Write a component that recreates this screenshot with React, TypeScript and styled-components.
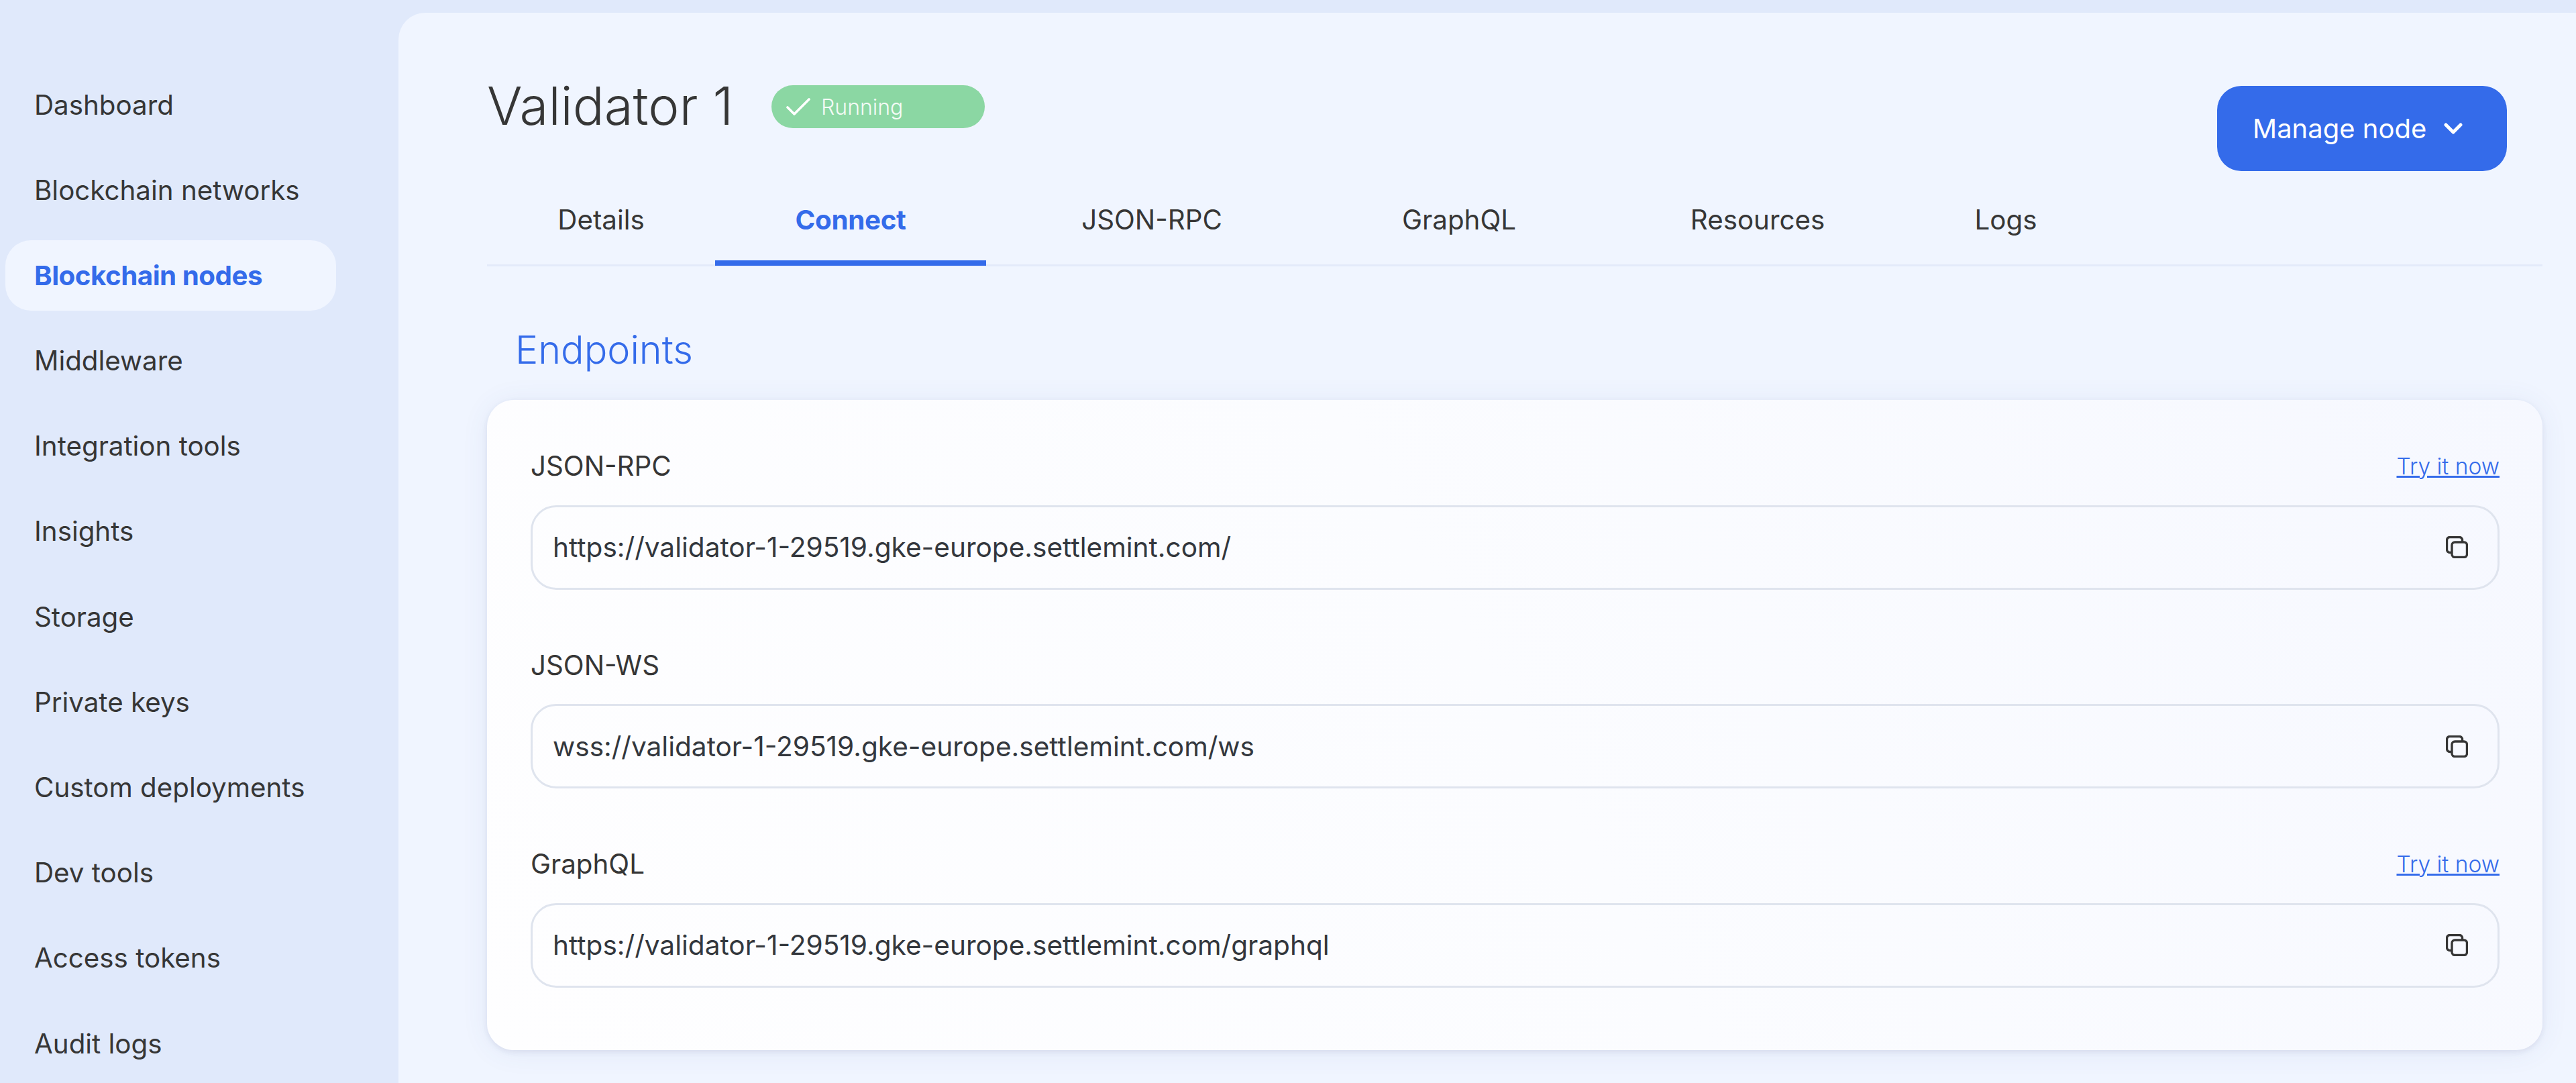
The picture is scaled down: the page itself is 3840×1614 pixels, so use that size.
import React from "react";
import styled, { createGlobalStyle } from "styled-components";

const ink = "#363636";
const blue = "#346bea";

const Global = createGlobalStyle`
  html, body { margin: 0; padding: 0; height: 100%; overflow: hidden; }
  body { background: #e0e9fb; font-family: "Inter", "Noto Sans", sans-serif; color: ${ink}; }
  * { box-sizing: border-box; }
`;

const Page = styled.div`
  display: flex;
  width: 3840px;
  height: 1614px;
  overflow: hidden;
  background: #e0e9fb;
`;

const Sidebar = styled.nav`
  flex: 0 0 594px;
  padding: 104px 93px 0 8px;
  display: flex;
  flex-direction: column;
  gap: 22.2px;
`;

const NavItem = styled.div<{ $active?: boolean }>`
  height: 105px;
  flex: 0 0 105px;
  display: flex;
  align-items: center;
  padding: 0 0 1px 43px;
  border-radius: 38px;
  font-size: 40.3px;
  letter-spacing: ${(p) => (p.$active ? "-0.5px" : "0")};
  white-space: nowrap;
  font-weight: ${(p) => (p.$active ? 700 : 375)};
  color: ${(p) => (p.$active ? blue : ink)};
  background: ${(p) => (p.$active ? "#f0f5ff" : "transparent")};
`;

const Main = styled.main`
  flex: 1;
  margin-top: 19px;
  background: #f0f5ff;
  border-top-left-radius: 40px;
  padding: 89px 50px 0 132px;
`;

const Header = styled.header`
  display: flex;
  justify-content: space-between;
  align-items: flex-start;
  height: 169px;
  padding-right: 53px;
`;

const TitleGroup = styled.div`
  display: flex;
  align-items: center;
  justify-content: flex-start;
`;

const Title = styled.h1`
  margin: 0 0 2px;
  width: 424px;
  font-size: 78px;
  line-height: 100px;
  font-weight: 300;
  color: ${ink};
`;

const Badge = styled.span`
  display: flex;
  align-items: center;
  gap: 16px;
  width: 318px;
  height: 64px;
  padding-left: 22px;
  border-radius: 32px;
  background: #8bd7a3;
  color: #f4fbf6;
  font-size: 32px;
  font-weight: 300;
`;

const ManageButton = styled.button`
  display: flex;
  align-items: center;
  gap: 26px;
  width: 432px;
  height: 127px;
  margin-top: 20px;
  padding: 0 0 0 53px;
  border: none;
  border-radius: 36px;
  background: ${blue};
  color: #fff;
  font-family: inherit;
  font-size: 40px;
  font-weight: 375;
`;

const Tabs = styled.div`
  display: flex;
  height: 119.5px;
  border-bottom: 3px solid #e3eafa;
`;

const Tab = styled.div<{ $active?: boolean; $width: number }>`
  flex: 0 0 ${(p) => p.$width}px;
  display: flex;
  align-items: center;
  justify-content: center;
  height: 118.5px;
  padding-bottom: 10px;
  font-size: 40.3px;
  letter-spacing: ${(p) => (p.$active ? "-0.3px" : "0")};
  font-weight: ${(p) => (p.$active ? 700 : 375)};
  color: ${(p) => (p.$active ? blue : ink)};
  border-bottom: 8px solid ${(p) => (p.$active ? blue : "transparent")};
`;

const SectionTitle = styled.h2`
  margin: 0;
  padding: 85px 0 0 42px;
  height: 199px;
  font-size: 57.5px;
  line-height: 78px;
  font-weight: 300;
  color: ${blue};
`;

const Card = styled.section`
  display: flex;
  flex-direction: column;
  gap: 81.5px;
  padding: 68px 64px 93px 65px;
  border-radius: 40px;
  background: linear-gradient(60deg, #fefeff 0%, #fbfcff 50%, #f6f8ff 100%);
  box-shadow: 0 3px 8px rgba(50, 60, 100, 0.09), 0 3px 40px rgba(60, 90, 170, 0.08);
`;

const Field = styled.div`
  display: flex;
  flex-direction: column;
  gap: 29px;
`;

const FieldHead = styled.div`
  display: flex;
  justify-content: space-between;
  align-items: center;
  height: 60px;
  padding-top: 2px;
`;

const Label = styled.label`
  font-size: 40.3px;
  font-weight: 375;
  color: ${ink};
`;

const TryLink = styled.a`
  font-size: 33.5px;
  font-weight: 300;
  color: ${blue};
  text-decoration: underline;
`;

const InputBox = styled.div`
  display: flex;
  align-items: center;
  justify-content: space-between;
  height: 126px;
  padding: 0 44px 0 30px;
  border: 3px solid #dfe4ee;
  border-radius: 38px;
`;

const Url = styled.span`
  font-size: 40.6px;
  font-weight: 400;
  color: #33373d;
`;

const CopyIcon = () => (
  <svg width="33" height="33" viewBox="0 0 33 33" fill="none" stroke="#363636" strokeWidth="3.4">
    <rect x="9" y="9" width="22.5" height="22.5" rx="4.5" />
    <path d="M9 24.5H6a4.5 4.5 0 0 1-4.5-4.5V6A4.5 4.5 0 0 1 6 1.5h14A4.5 4.5 0 0 1 24.5 6v3" />
  </svg>
);

const CheckIcon = () => (
  <svg width="36" height="26" viewBox="0 0 36 26" fill="none" stroke="#fff" strokeWidth="3.6" strokeLinecap="round" strokeLinejoin="round">
    <path d="M2 14 L12 24 L34 2" />
  </svg>
);

const ChevronIcon = () => (
  <svg width="28" height="18" viewBox="0 0 28 18" fill="none" stroke="#fff" strokeWidth="5" strokeLinecap="round" strokeLinejoin="round">
    <path d="M3 3 L14 14 L25 3" />
  </svg>
);

const nav = [
  "Dashboard",
  "Blockchain networks",
  "Blockchain nodes",
  "Middleware",
  "Integration tools",
  "Insights",
  "Storage",
  "Private keys",
  "Custom deployments",
  "Dev tools",
  "Access tokens",
  "Audit logs",
];

const tabs: [string, number][] = [
  ["Details", 340],
  ["Connect", 404],
  ["JSON-RPC", 494],
  ["GraphQL", 422],
  ["Resources", 468],
  ["Logs", 272],
];

const fields: { label: string; url: string; link: boolean }[] = [
  { label: "JSON-RPC", url: "https://validator-1-29519.gke-europe.settlemint.com/", link: true },
  { label: "JSON-WS", url: "wss://validator-1-29519.gke-europe.settlemint.com/ws", link: false },
  { label: "GraphQL", url: "https://validator-1-29519.gke-europe.settlemint.com/graphql", link: true },
];

export default function App() {
  return (
    <Page>
      <Global />
      <Sidebar>
        {nav.map((n) => (
          <NavItem key={n} $active={n === "Blockchain nodes"}>
            {n}
          </NavItem>
        ))}
      </Sidebar>
      <Main>
        <Header>
          <TitleGroup>
            <Title>Validator 1</Title>
            <Badge>
              <CheckIcon />
              Running
            </Badge>
          </TitleGroup>
          <ManageButton>
            Manage node
            <ChevronIcon />
          </ManageButton>
        </Header>
        <Tabs>
          {tabs.map(([t, w]) => (
            <Tab key={t} $width={w} $active={t === "Connect"}>
              {t}
            </Tab>
          ))}
        </Tabs>
        <SectionTitle>Endpoints</SectionTitle>
        <Card>
          {fields.map((f) => (
            <Field key={f.label}>
              <FieldHead>
                <Label>{f.label}</Label>
                {f.link && <TryLink href="#">Try it now</TryLink>}
              </FieldHead>
              <InputBox>
                <Url>{f.url}</Url>
                <CopyIcon />
              </InputBox>
            </Field>
          ))}
        </Card>
      </Main>
    </Page>
  );
}
